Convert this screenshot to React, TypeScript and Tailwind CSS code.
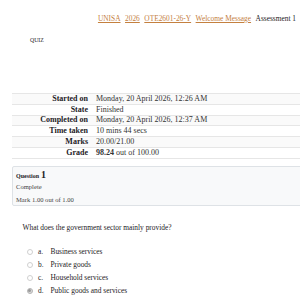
import React from "react";

const rows: { label: string; value: React.ReactNode }[] = [
  { label: "Started on", value: "Monday, 20 April 2026, 12:26 AM" },
  { label: "State", value: "Finished" },
  { label: "Completed on", value: "Monday, 20 April 2026, 12:37 AM" },
  { label: "Time taken", value: "10 mins 44 secs" },
  { label: "Marks", value: "20.00/21.00" },
  {
    label: "Grade",
    value: (
      <>
        <b>98.24</b> out of 100.00
      </>
    ),
  },
];

const options = [
  { l: "a.", t: "Business services", c: false },
  { l: "b.", t: "Private goods", c: false },
  { l: "c.", t: "Household services", c: false },
  { l: "d.", t: "Public goods and services", c: true },
];

export default function App() {
  return (
    <div className="w-[300px] h-[300px] overflow-hidden bg-white text-[#1d2125] font-['Liberation_Serif','Times_New_Roman',serif] flex flex-col">
      <div className="mt-[14px] h-[10px] flex items-center justify-end gap-[4.5px] pr-[4px] text-[7.4px] leading-[10px]">
        <span className="text-[#c4803f] underline">UNISA</span>
        <span className="text-[#c4803f] underline">2026</span>
        <span className="text-[#c4803f] underline">OTE2601-26-Y</span>
        <span className="text-[#c4803f] underline">Welcome Message</span>
        <span>Assessment 1</span>
      </div>
      <div className="mt-[13px] h-[6px] pl-[30px] text-[5.8px] leading-[6px]">QUIZ</div>

      <div className="mt-[50px] ml-[12px] w-[300px] flex flex-col border-b border-[#e6e6e6]">
        {rows.map((r, i) => (
          <div
            key={r.label}
            className={`flex h-[10.75px] items-center border-t border-[#e6e6e6] ${i % 2 === 0 ? "bg-[#fafafa]" : "bg-white"}`}
          >
            <div className="w-[80px] shrink-0 pr-[4px] text-right font-bold text-[8px] leading-[10px]">{r.label}</div>
            <div className="pl-[4px] text-[8px] leading-[10px] whitespace-nowrap text-[#333]">{r.value}</div>
          </div>
        ))}
      </div>

      <div className="mt-[7px] ml-[12px] w-[300px] h-[40px] border border-[#dee2e6] bg-[#f8f9fa] rounded-[2px] pl-[3px] flex flex-col">
        <div className="mt-[3px] h-[10px] flex items-end">
          <span className="font-bold text-[6px] leading-[8px]">Question</span>
          <span className="ml-[2px] font-bold text-[10px] leading-[10px]">1</span>
        </div>
        <div className="mt-[3px] h-[7px] text-[6.6px] leading-[7px] text-[#444]">Complete</div>
        <div className="mt-[6px] h-[7px] text-[6.6px] leading-[7px] text-[#444]">Mark 1.00 out of 1.00</div>
      </div>

      <div className="mt-[17.5px] h-[10px] pl-[22.5px] text-[7.4px] leading-[10px]">
        What does the government sector mainly provide?
      </div>

      <div className="mt-[12px] flex flex-col">
        {options.map((o) => (
          <div key={o.l} className="h-[13px] flex items-center text-[7.4px] leading-[10px]">
            <span
              className={`ml-[26.5px] w-[6px] h-[6px] rounded-full border ${o.c ? "border-[#b5b5b5] bg-[#d9d9d9]" : "border-[#d0d0d0] bg-white"} flex items-center justify-center`}
            >
              {o.c && <span className="w-[2.5px] h-[2.5px] rounded-full bg-[#9a9a9a]" />}
            </span>
            <span className="ml-[5.5px] w-[12.5px]">{o.l}</span>
            <span>{o.t}</span>
          </div>
        ))}
      </div>
    </div>
  );
}
